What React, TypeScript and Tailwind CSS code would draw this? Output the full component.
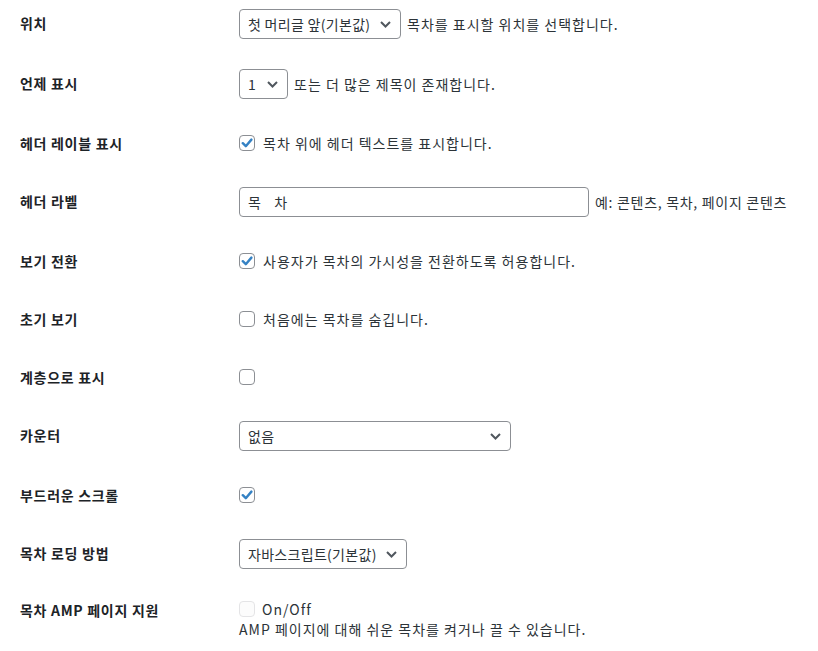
import React from 'react';

const FONT = "font-['Noto_Sans_CJK_KR','Noto_Sans',sans-serif]";

function Chevron() {
  return (
    <svg width="11" height="7" viewBox="0 0 11 7" className="shrink-0">
      <polyline points="1,1 5.5,5.5 10,1" fill="none" stroke="#50575e" strokeWidth="2" />
    </svg>
  );
}

function Select({ value, width }: { value: string; width: string }) {
  return (
    <div
      className={`${width} h-[30px] shrink-0 flex items-center justify-between pl-2 pr-[9px] border border-[#8c8f94] rounded-[4px] bg-white text-[14px] tracking-[0.3px] text-[#2c3338]`}
    >
      <span className="whitespace-nowrap">{value}</span>
      <Chevron />
    </div>
  );
}

function Checkbox({ checked, disabled }: { checked?: boolean; disabled?: boolean }) {
  return (
    <div
      className={`w-4 h-4 shrink-0 rounded-[4px] border flex items-center justify-center ${
        disabled ? 'border-[#e4e4e6] bg-[#fcfcfc]' : 'border-[#8c8f94] bg-white'
      }`}
    >
      {checked && (
        <svg width="12" height="12" viewBox="0 0 12 12">
          <polyline points="1.8,6.2 4.8,9.2 10.4,2.6" fill="none" stroke="#3582c4" strokeWidth="2.4" strokeLinecap="round" strokeLinejoin="round" />
        </svg>
      )}
    </div>
  );
}

function Label({ children, className = '' }: { children: React.ReactNode; className?: string }) {
  return (
    <div className={`w-[239px] shrink-0 pl-5 text-[14px] font-semibold leading-[18px] tracking-[0.7px] text-[#1d2327] ${className}`}>
      {children}
    </div>
  );
}

function CheckRow({ label, checked, text }: { label: string; checked?: boolean; text?: string }) {
  return (
    <div className="flex">
      <Label className="py-5">{label}</Label>
      <div className="py-[15px]">
        <div className="h-[28px] flex items-center gap-2 text-[14px] text-[#2c3338]">
          <Checkbox checked={checked} />
          {text && <span>{text}</span>}
        </div>
      </div>
    </div>
  );
}

function SelectRow({ label, children }: { label: string; children: React.ReactNode }) {
  return (
    <div className="flex">
      <Label className="py-5">{label}</Label>
      <div className="py-[15px] flex items-center gap-[6px] text-[14px] text-[#2c3338]">{children}</div>
    </div>
  );
}

export default function App() {
  return (
    <div className={`w-[818px] h-[651px] overflow-hidden bg-white tracking-[1px] ${FONT}`}>
      <div className="-mt-[6px] flex flex-col">
        <SelectRow label="위치">
          <Select value="첫 머리글 앞(기본값)" width="w-[162px]" />
          <span>목차를 표시할 위치를 선택합니다.</span>
        </SelectRow>

        <SelectRow label="언제 표시">
          <Select value="1" width="w-[49px]" />
          <span>또는 더 많은 제목이 존재합니다.</span>
        </SelectRow>

        <CheckRow label="헤더 레이블 표시" checked text="목차 위에 헤더 텍스트를 표시합니다." />

        <SelectRow label="헤더 라벨">
          <div className="w-[350px] h-[30px] flex items-center px-2 border border-[#8c8f94] rounded-[4px] bg-white text-[#2c3338] whitespace-pre">
            목   차
          </div>
          <span className="tracking-[0.7px]">예: 콘텐츠, 목차, 페이지 콘텐츠</span>
        </SelectRow>

        <CheckRow label="보기 전환" checked text="사용자가 목차의 가시성을 전환하도록 허용합니다." />
        <CheckRow label="초기 보기" text="처음에는 목차를 숨깁니다." />
        <CheckRow label="계층으로 표시" />

        <SelectRow label="카운터">
          <Select value="없음" width="w-[272px]" />
        </SelectRow>

        <CheckRow label="부드러운 스크롤" checked />

        <SelectRow label="목차 로딩 방법">
          <Select value="자바스크립트(기본값)" width="w-[168px]" />
        </SelectRow>

        <div className="flex">
          <Label className="pt-[17px]">목차 AMP 페이지 지원</Label>
          <div className="pt-[16px] text-[14px] text-[#2c3338] leading-[18px]">
            <div className="h-[18px] flex items-center gap-[7px]">
              <Checkbox disabled />
              <span>On/Off</span>
            </div>
            <div className="mt-[2px]">AMP 페이지에 대해 쉬운 목차를 켜거나 끌 수 있습니다.</div>
          </div>
        </div>
      </div>
    </div>
  );
}
